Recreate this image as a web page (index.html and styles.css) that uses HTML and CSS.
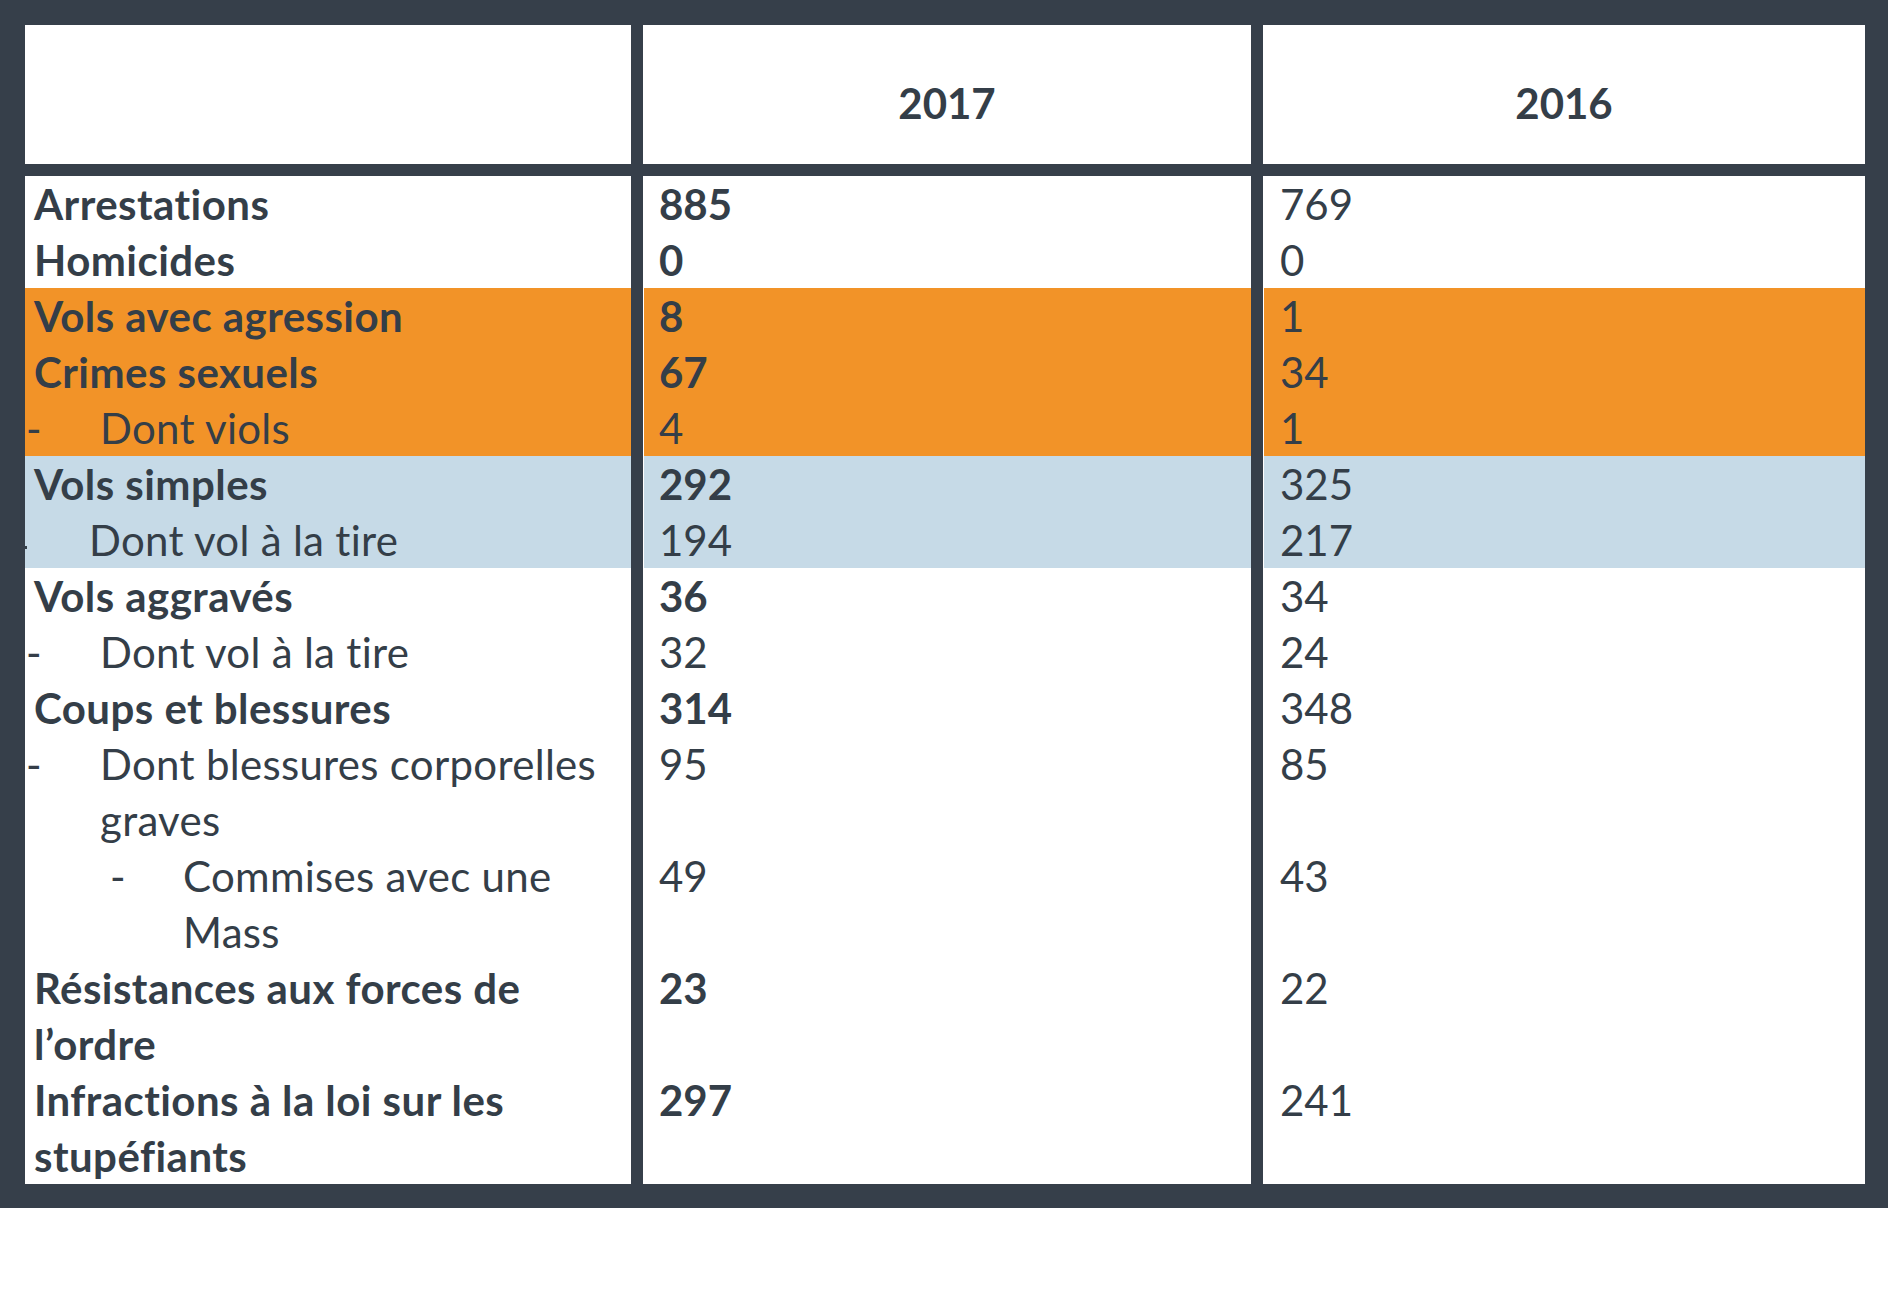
FILE: index.html
```html
<!DOCTYPE html>
<html lang="fr">
<head>
<meta charset="utf-8">
<title>Statistiques</title>
<link rel="stylesheet" href="styles.css">
</head>
<body>
<div class="frame">
  <div class="table">
    <div class="th"></div>
    <div class="th">2017</div>
    <div class="th">2016</div>

    <div class="cell c1 b">Arrestations</div>
    <div class="cell c2 b">885</div>
    <div class="cell c3">769</div>

    <div class="cell c1 b">Homicides</div>
    <div class="cell c2 b">0</div>
    <div class="cell c3">0</div>

    <div class="cell c1 b orange">Vols avec agression</div>
    <div class="cell c2 b orange">8</div>
    <div class="cell c3 orange">1</div>

    <div class="cell c1 b orange">Crimes sexuels</div>
    <div class="cell c2 b orange">67</div>
    <div class="cell c3 orange">34</div>

    <div class="cell c1 orange sub"><span class="dash">-</span><span class="txt">Dont viols</span></div>
    <div class="cell c2 orange">4</div>
    <div class="cell c3 orange">1</div>

    <div class="cell c1 b blue">Vols simples</div>
    <div class="cell c2 b blue">292</div>
    <div class="cell c3 blue">325</div>

    <div class="cell c1 blue sub"><span class="stub"></span><span class="txt">Dont vol à la tire</span></div>
    <div class="cell c2 blue">194</div>
    <div class="cell c3 blue">217</div>

    <div class="cell c1 b">Vols aggravés</div>
    <div class="cell c2 b">36</div>
    <div class="cell c3">34</div>

    <div class="cell c1 sub"><span class="dash">-</span><span class="txt">Dont vol à la tire</span></div>
    <div class="cell c2">32</div>
    <div class="cell c3">24</div>

    <div class="cell c1 b">Coups et blessures</div>
    <div class="cell c2 b">314</div>
    <div class="cell c3">348</div>

    <div class="cell c1 sub"><span class="dash">-</span><span class="txt">Dont blessures corporelles<br>graves</span></div>
    <div class="cell c2">95</div>
    <div class="cell c3">85</div>

    <div class="cell c1 sub sub2"><span class="dash">-</span><span class="txt">Commises avec une<br>Mass</span></div>
    <div class="cell c2">49</div>
    <div class="cell c3">43</div>

    <div class="cell c1 b">Résistances aux forces de<br>l’ordre</div>
    <div class="cell c2 b">23</div>
    <div class="cell c3">22</div>

    <div class="cell c1 b">Infractions à la loi sur les<br>stupéfiants</div>
    <div class="cell c2 b">297</div>
    <div class="cell c3">241</div>
  </div>
</div>
</body>
</html>
```
FILE: styles.css
```css
html, body {
  margin: 0;
  padding: 0;
  background: #ffffff;
}

body {
  font-family: Lato, "Open Sans", "Liberation Sans", sans-serif;
  font-size: 42px;
  line-height: 56px;
  color: #343e48;
}

.frame {
  background: #363f4a;
  padding: 25px 23px 24px 25px;
  width: 1888px;
  box-sizing: border-box;
}

.table {
  display: grid;
  grid-template-columns: 606px 608px 602px;
  column-gap: 12px;
}

.th {
  background: #ffffff;
  height: 139px;
  margin-bottom: 12px;
  box-sizing: border-box;
  padding-top: 50px;
  text-align: center;
  font-weight: 700;
}

.cell {
  background: #ffffff;
  overflow: hidden;
  white-space: nowrap;
}

.c1 {
  padding-left: 9px;
  letter-spacing: 0.45px;
}

.c1 .txt {
  letter-spacing: 0.3px;
}

.c2 {
  padding-left: 16px;
}

.c3 {
  padding-left: 17px;
}

.b {
  font-weight: 700;
}

.orange {
  background: #f29328;
}

.blue {
  background: #c6dae7;
}

.c2.orange, .c3.orange, .c2.blue, .c3.blue {
  box-shadow: inset 1px 0 0 #ffffff;
}

.sub {
  display: flex;
  align-items: flex-start;
}

.dash {
  flex: none;
  width: 74px;
  margin-left: -8px;
  letter-spacing: 0;
}

.stub {
  flex: none;
  width: 2px;
  height: 3px;
  margin-top: 34px;
  margin-left: -9px;
  margin-right: 62px;
  background: #343e48;
}

.sub2 .dash {
  margin-left: 76px;
  width: 73px;
}

.txt {
  display: block;
}
```
